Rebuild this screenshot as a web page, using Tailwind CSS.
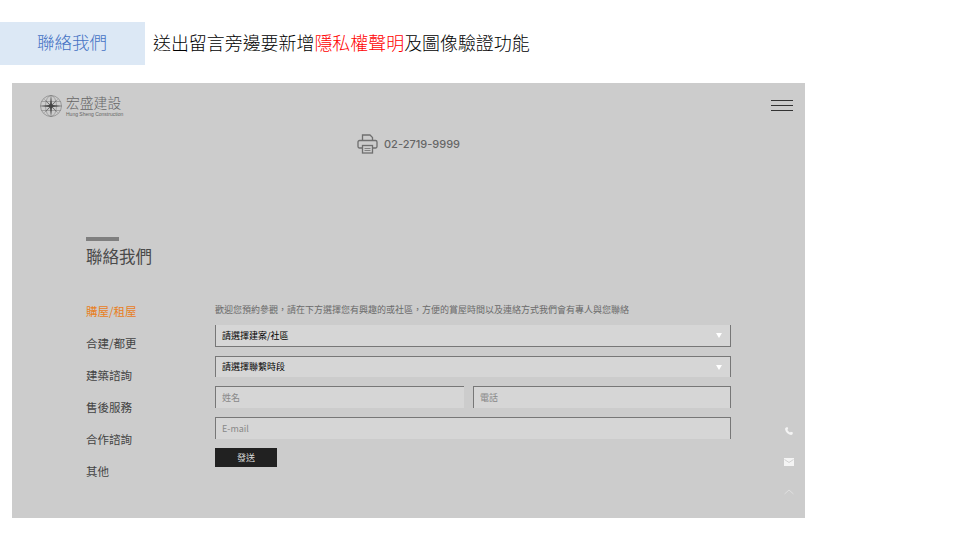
<!DOCTYPE html>
<html lang="zh-Hant">
<head>
  <meta charset="UTF-8" />
  <title>聯絡我們</title>
  <script src="https://cdn.jsdelivr.net/npm/@tailwindcss/browser@4"></script>
</head>
<body class="bg-white w-[960px] h-[540px] overflow-hidden font-['Noto_Sans_CJK_TC','Noto_Sans',sans-serif]">

  <!-- slide title -->
  <header class="flex items-center h-[43px] mt-[22px]">
    <div class="w-[145px] h-full bg-[#dce8f5] text-[#4472c4] text-[17.5px] font-light flex items-center justify-center pb-[2px] pr-[1px]">聯絡我們</div>
    <p class="ml-2 pb-[2px] text-[17.95px] font-light text-black">送出留言旁邊要新增<span class="text-[#ff0000]">隱私權聲明</span>及圖像驗證功能</p>
  </header>

  <!-- site screenshot -->
  <main class="relative ml-3 mt-[18px] w-[793px] h-[435px] bg-[#cccccc]">
    <div class="flex items-start justify-between pl-[27px] pr-3 pt-[11px] h-[42px]">
      <div class="flex items-center gap-[3px]">
        <svg class="w-[24px] h-[24px]" viewBox="0 0 24 24" fill="none" stroke="#777" stroke-width="0.6">
          <circle cx="12" cy="12" r="10.5" />
          <ellipse cx="12" cy="12" rx="5.5" ry="10.5" stroke-width="0.5" />
          <path d="M2.500 7.500h19M1.500 12h21M2.500 16.500h19" stroke-width="0.5" />
          <path d="M12 1L13 10.500L19.500 4.500L13.500 11L23 12L13.500 13L19.500 19.500L13 13.500L12 23L11 13.500L4.500 19.500L10.500 13L1 12L10.500 11L4.500 4.500L11 10.500Z" fill="#444" stroke="none" />
        </svg>
        <div class="flex flex-col text-[#666]">
          <span class="text-[13.8px] leading-[15px] font-light">宏盛建設</span>
          <span class="text-[5px] leading-[6px] mt-[1px] font-['Liberation_Sans',sans-serif] whitespace-nowrap">Hung Sheng Construction</span>
        </div>
      </div>
      <button class="flex flex-col gap-[4px] w-[22px] mt-[6px]">
        <span class="block h-px bg-[#333]"></span>
        <span class="block h-px bg-[#333]"></span>
        <span class="block h-px bg-[#333]"></span>
      </button>
    </div>

    <div class="flex items-center justify-center gap-[6px] h-[20px] mt-[9px]">
      <svg class="w-[21px] h-[20px]" viewBox="0 0 21 20" fill="none" stroke="#6f6f6f" stroke-width="1.3">
        <path d="M5.500 6.500V1h7.500l2.500 2.500v3" />
        <path d="M5 14H2.500a1.500 1.500 0 0 1-1.500-1.500V8a1.500 1.500 0 0 1 1.500-1.500h16A1.500 1.500 0 0 1 20 8v4.500a1.500 1.500 0 0 1-1.500 1.500H16" />
        <rect x="5.500" y="11.500" width="10" height="7.500" />
        <path d="M7.500 14.500h6M7.500 16.500h6" stroke-width="0.8" />
      </svg>
      <span class="text-[11px] font-medium text-[#666] font-['Inter',sans-serif]">02-2719-9999</span>
    </div>

    <section class="pl-[74px] pt-[83px]">
      <div class="w-[33px] h-[4px] bg-[#7f7f7f]"></div>
      <h1 class="text-[16.5px] leading-[24px] mt-[3px] text-[#4a4a4a]">聯絡我們</h1>

      <div class="flex mt-[31px]">
        <nav class="w-[129px] flex flex-col gap-[14px] pt-[3px] text-[11.5px] leading-[18px] text-[#444]">
          <a class="text-[#e8801e]">購屋/租屋</a>
          <a>合建/都更</a>
          <a>建築諮詢</a>
          <a>售後服務</a>
          <a>合作諮詢</a>
          <a>其他</a>
        </nav>

        <form class="w-[516px] flex flex-col">
          <p class="text-[9px] leading-[14px] h-[14px] mt-[4px] text-[#6a6a6a] whitespace-nowrap">歡迎您預約參觀，請在下方選擇您有興趣的或社區，方便的賞屋時間以及連絡方式我們會有專人與您聯絡</p>

          <div class="flex items-center justify-between h-[22px] mt-[8px] bg-[#d6d6d6] border-x border-b border-[#777] pl-[6px] pr-[8px] text-[9px] text-black">
            <span>請選擇建案/社區</span>
            <span class="w-0 h-0 border-x-[3px] border-x-transparent border-t-[5px] border-t-white"></span>
          </div>
          <div class="flex items-center justify-between h-[21px] mt-[9px] bg-[#d6d6d6] border-x border-t border-[#777] pl-[6px] pr-[8px] text-[9px] text-black">
            <span>請選擇聯繫時段</span>
            <span class="w-0 h-0 border-x-[3px] border-x-transparent border-t-[5px] border-t-white"></span>
          </div>

          <div class="flex justify-between mt-[9px]">
            <div class="w-[249px] h-[22px] flex items-center bg-[#d6d6d6] border-l border-t border-[#777] pl-[6px] text-[9px] text-[#888]">姓名</div>
            <div class="w-[258px] h-[22px] flex items-center bg-[#d6d6d6] border-x border-t border-[#777] pl-[6px] text-[9px] text-[#888]">電話</div>
          </div>
          <div class="h-[22px] mt-[9px] flex items-center bg-[#d6d6d6] border-x border-t border-[#777] pl-[6px] text-[9px] text-[#888]">E-mail</div>

          <button type="button" class="w-[62px] h-[19px] mt-[9px] bg-[#212121] text-[#ddd] text-[9px] flex items-center justify-center">發送</button>
        </form>
      </div>
    </section>

    <!-- floating side icons -->
    <div class="absolute left-[772px] top-[344px] flex flex-col items-center gap-[23px] w-[10px]">
      <svg class="w-[8px] h-[8px]" viewBox="0 0 8 8" fill="#f4f4f4"><path d="M1 0.500L2.500 0 3.200 2 2.300 2.800C2.800 4 3.800 5 5 5.500L5.800 4.700 8 5.500 7.500 7.200C7.200 7.800 6.500 8 6 8 3 7.500 0.500 5 0 2 0 1.400 0.400 0.800 1 0.500Z" /></svg>
      <svg class="w-[10px] h-[8px]" viewBox="0 0 10 8"><rect width="10" height="8" fill="#f4f4f4" /><path d="M0.500 1.500L5 4.500 9.500 1.500" fill="none" stroke="#bbb" stroke-width="0.6" /></svg>
      <svg class="w-[10px] h-[6px]" viewBox="0 0 10 6" fill="none" stroke="#e6e6e6" stroke-width="0.7"><path d="M0.500 5L5 1 9.500 5" /></svg>
    </div>
  </main>

</body>
</html>
